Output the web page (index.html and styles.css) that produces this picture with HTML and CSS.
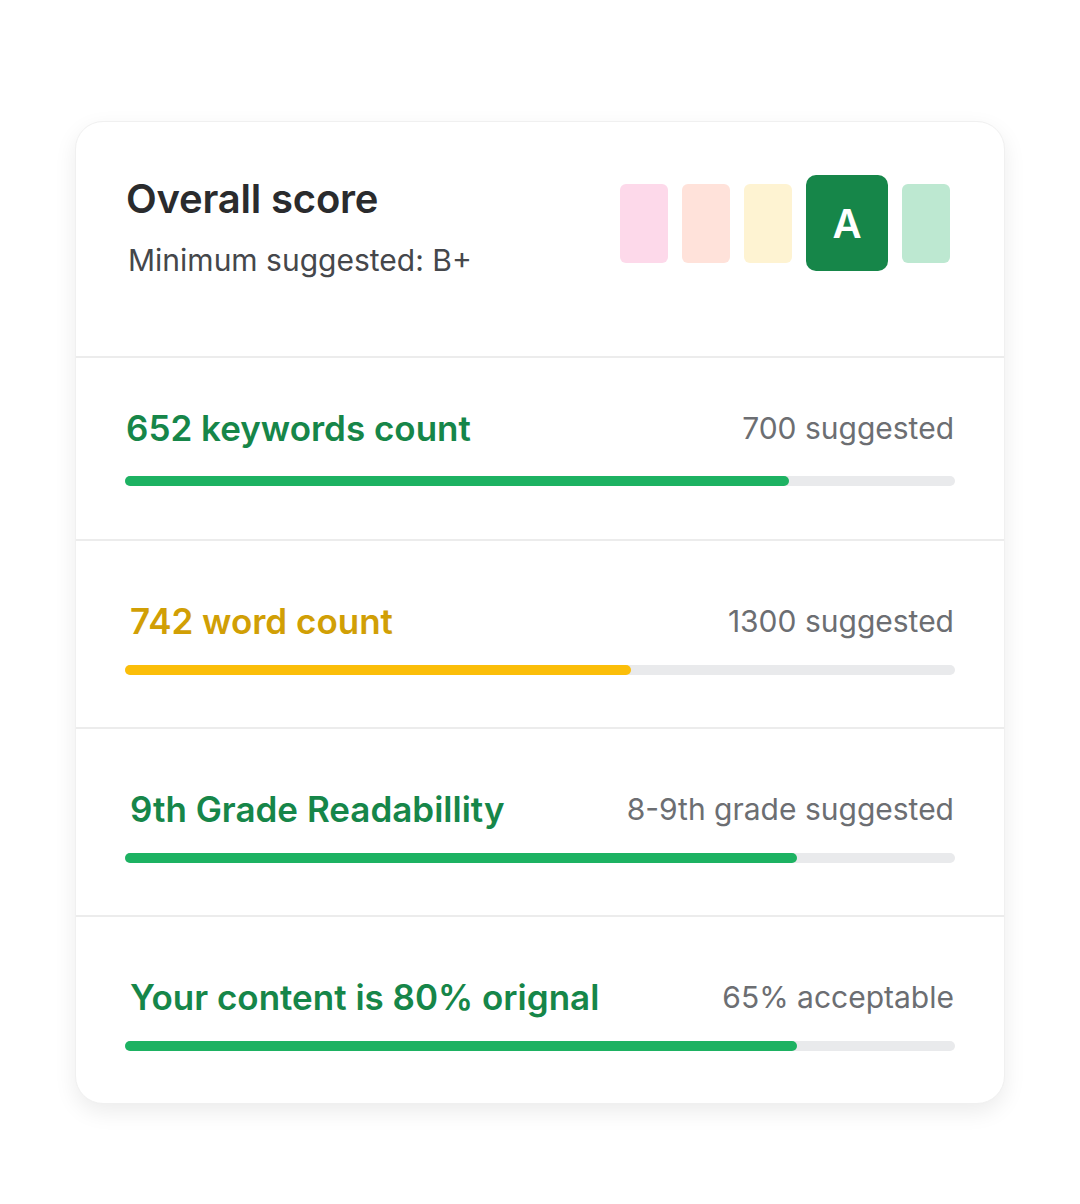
FILE: index.html
```html
<!DOCTYPE html>
<html lang="en">
<head>
    <meta charset="UTF-8">
    <meta name="viewport" content="width=device-width, initial-scale=1.0">
    <title>Content score</title>
    <link rel="stylesheet" href="styles.css">
</head>
<body>
    <div class="card">
        <div class="header">
            <div>
                <h1>Overall score</h1>
                <p class="minimum">Minimum suggested: B+</p>
            </div>
            <div class="grades">
                <div class="grade grade-pink"></div>
                <div class="grade grade-peach"></div>
                <div class="grade grade-yellow"></div>
                <div class="grade grade-current">A</div>
                <div class="grade grade-mint"></div>
            </div>
        </div>

        <div class="metric metric-first">
            <div class="metric-row">
                <span class="metric-title good">652 keywords count</span>
                <span class="metric-note">700 suggested</span>
            </div>
            <div class="bar"><div class="fill good-fill" style="width: 80%"></div></div>
        </div>

        <div class="metric">
            <div class="metric-row">
                <span class="metric-title warn">742 word count</span>
                <span class="metric-note">1300 suggested</span>
            </div>
            <div class="bar"><div class="fill warn-fill" style="width: 61%"></div></div>
        </div>

        <div class="metric">
            <div class="metric-row">
                <span class="metric-title good">9th Grade Readabillity</span>
                <span class="metric-note">8-9th grade suggested</span>
            </div>
            <div class="bar"><div class="fill good-fill" style="width: 81%"></div></div>
        </div>

        <div class="metric">
            <div class="metric-row">
                <span class="metric-title good">Your content is 80% orignal</span>
                <span class="metric-note">65% acceptable</span>
            </div>
            <div class="bar"><div class="fill good-fill" style="width: 81%"></div></div>
        </div>
    </div>
</body>
</html>
```

FILE: styles.css
```css
body {
    margin: 0;
    padding: 121px 0 100px;
    background-color: #ffffff;
    font-family: Inter, "Noto Sans", sans-serif;
}
.card {
    width: 930px;
    margin: 0 auto;
    background-color: white;
    border: 1px solid #f0f0f0;
    border-radius: 28px;
    box-shadow: 0 8px 22px rgba(0,0,0,0.08);
    box-sizing: border-box;
    overflow: hidden;
}
.header {
    display: flex;
    justify-content: space-between;
    align-items: flex-start;
    padding: 53px 54px 78px 50px;
    border-bottom: 2px solid #ececec;
}
h1 {
    margin: 0;
    font-size: 40px;
    line-height: 48px;
    font-weight: 600;
    color: #2a2b2d;
    letter-spacing: -0.2px;
}
.minimum {
    margin: 19px 0 0 2px;
    font-size: 30px;
    line-height: 36px;
    color: #45474b;
}
.grades {
    display: flex;
    align-items: center;
    gap: 14px;
}
.grade {
    width: 48px;
    height: 79px;
    border-radius: 6px;
}
.grade-pink { background-color: #fdd9ea; }
.grade-peach { background-color: #ffe2da; }
.grade-yellow { background-color: #fef3d2; }
.grade-mint { background-color: #bde8d1; }
.grade-current {
    width: 82px;
    height: 96px;
    border-radius: 10px;
    background-color: #168649;
    color: white;
    font-size: 40px;
    font-weight: 600;
    display: flex;
    align-items: center;
    justify-content: center;
}
.metric {
    padding: 60px 49px 52px;
    border-bottom: 2px solid #ececec;
}
.metric:last-child {
    border-bottom: none;
}
.metric-row {
    display: flex;
    justify-content: space-between;
    align-items: center;
    height: 40px;
    margin-bottom: 24px;
}
.metric-first {
    padding-top: 50px;
    padding-bottom: 53px;
}
.metric-first .metric-row {
    margin-bottom: 28px;
}
.metric-title {
    font-size: 35px;
    font-weight: 600;
    padding-left: 5px;
}
.metric-first .metric-title {
    padding-left: 1px;
}
.metric-note {
    font-size: 30px;
    color: #6c6e72;
    padding-right: 1px;
}
.good { color: #168649; }
.warn { color: #d19f05; }
.bar {
    height: 10px;
    border-radius: 5px;
    background-color: #e9eaec;
}
.fill {
    height: 100%;
    border-radius: 5px;
}
.good-fill { background-color: #1db262; }
.warn-fill { background-color: #fbbe09; }
```
